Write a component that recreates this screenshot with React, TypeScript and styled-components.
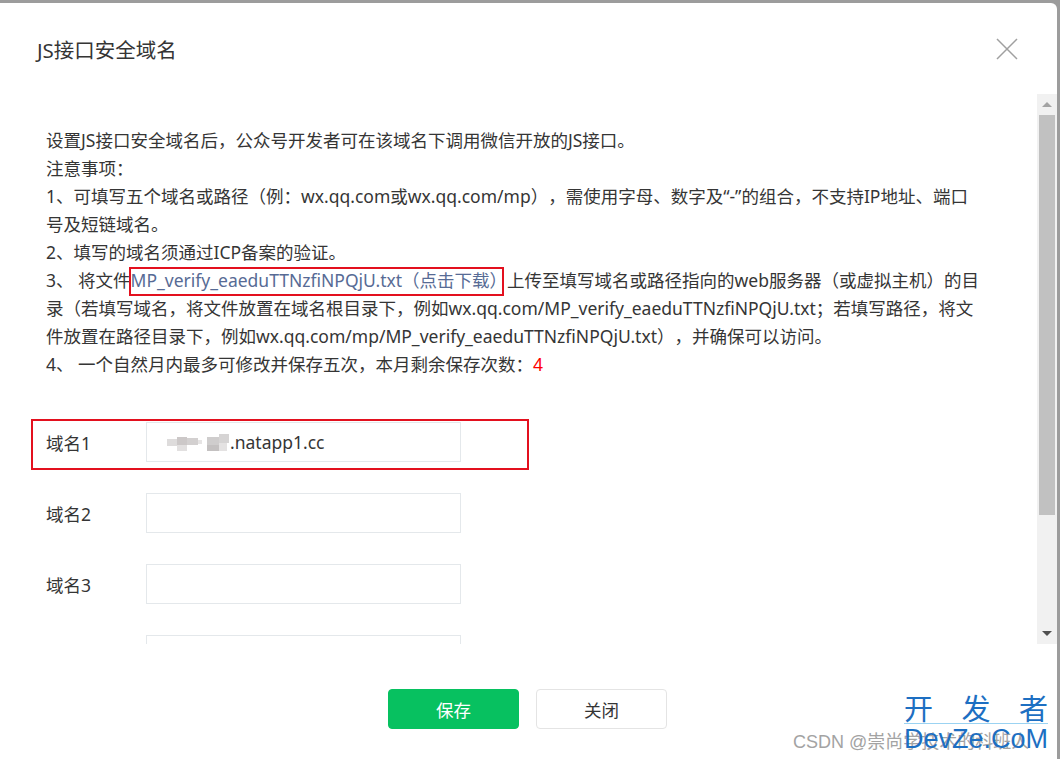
import React from 'react';
import styled, { createGlobalStyle } from 'styled-components';

const GlobalStyle = createGlobalStyle`
  html, body {
    margin: 0;
    padding: 0;
    background: #9c9c9c;
    overflow: hidden;
  }
  body {
    font-family: "Noto Sans", "Noto Sans CJK SC", sans-serif;
    text-spacing-trim: space-all;
  }
`;

const Page = styled.div`
  position: relative;
  width: 1060px;
  height: 759px;
  padding-top: 3px;
  box-sizing: border-box;
  overflow: hidden;
`;

const Dialog = styled.div`
  width: 1057px;
  height: 800px;
  background: #fff;
  border-top-right-radius: 6px;
  display: flex;
  flex-direction: column;
`;

const Header = styled.div`
  flex: none;
  height: 91px;
  display: flex;
  align-items: center;
  justify-content: space-between;
  padding: 0 39px 0 37px;
`;

const Title = styled.h3`
  margin: 0;
  font-size: 20.5px;
  font-weight: normal;
  color: #353535;
`;

const CloseIcon = styled.svg`
  width: 22px;
  height: 22px;
  color: #a0a0a0;
`;

const Body = styled.div`
  flex: none;
  height: 550px;
  display: flex;
`;

const Content = styled.div`
  flex: 1;
  overflow: hidden;
  padding: 32px 0 0 46px;
`;

const Notice = styled.div`
  width: 960px;
  font-size: 17.5px;
  line-height: 28px;
  color: #353535;
`;

const Para = styled.p`
  margin: 0;
`;

const Link = styled.span`
  position: relative;
  color: #576b95;

  &::after {
    content: '';
    position: absolute;
    left: -2px;
    right: 3px;
    top: -1px;
    bottom: -4px;
    border: 2px solid #e3101e;
  }
`;

const Count = styled.span`
  color: #f00;
`;

const Form = styled.div`
  margin-top: 44px;
  display: flex;
  flex-direction: column;
  gap: 31px;
`;

const Row = styled.div<{ $marked?: boolean }>`
  position: relative;
  display: flex;
  align-items: center;
  height: 40px;

  ${({ $marked }) =>
    $marked &&
    `
    &::after {
      content: '';
      position: absolute;
      left: -15px;
      top: -3px;
      width: 498px;
      height: 51px;
      box-sizing: border-box;
      border: 2px solid #e3101e;
    }
  `}
`;

const Label = styled.label`
  width: 100px;
  font-size: 17.5px;
  color: #353535;
`;

const Field = styled.div`
  width: 315px;
  height: 40px;
  box-sizing: border-box;
  border: 1px solid #e4e8eb;
  display: flex;
  align-items: center;
  padding-left: 20px;
  font-size: 17.5px;
  color: #353535;
`;

const Mosaic = styled.svg`
  width: 63px;
  height: 18px;
  flex: none;
`;

const Scrollbar = styled.div`
  flex: none;
  width: 20px;
  background: #f1f1f1;
  display: flex;
  flex-direction: column;
`;

const ScrollArrow = styled.div<{ $down?: boolean }>`
  flex: none;
  height: 21px;
  display: flex;
  align-items: center;
  justify-content: center;

  &::before {
    content: '';
    border-left: 5px solid transparent;
    border-right: 5px solid transparent;
    ${({ $down }) =>
      $down ? 'border-top: 5px solid #505050;' : 'border-bottom: 5px solid #a3a3a3;'}
  }
`;

const ScrollTrack = styled.div`
  flex: 1;
  padding: 0 2px;
`;

const Thumb = styled.div`
  height: 400px;
  background: #c1c1c1;
`;

const Footer = styled.div`
  flex: none;
  display: flex;
  justify-content: center;
  gap: 17px;
  padding-top: 45px;
  padding-right: 2px;
`;

const Button = styled.button<{ $primary?: boolean }>`
  width: 131px;
  height: 40px;
  border-radius: 4px;
  font-family: inherit;
  font-size: 17.5px;
  cursor: pointer;
  border: 1px solid ${({ $primary }) => ($primary ? '#07c160' : '#e4e4e4')};
  background: ${({ $primary }) => ($primary ? '#07c160' : '#fff')};
  color: ${({ $primary }) => ($primary ? '#fff' : '#353535')};
`;

const Watermark = styled.div`
  position: absolute;
  right: 0;
  bottom: 0;
  width: 270px;
  height: 70px;
  pointer-events: none;
`;

const Brand = styled.div`
  position: absolute;
  left: 114px;
  top: 2px;
  width: 144px;
  display: flex;
  justify-content: space-between;
  font-family: "Noto Sans CJK SC", sans-serif;
  font-size: 29px;
  line-height: 32px;
  color: #1d6fc2;
  border-bottom: 1px solid #9bd3f2;
`;

const BrandSub = styled.div`
  position: absolute;
  left: 114px;
  top: 35px;
  white-space: nowrap;
  font-family: "Liberation Sans", sans-serif;
  font-size: 27px;
  line-height: 30px;
  color: #1d6fc2;
`;

const Credit = styled.div`
  position: absolute;
  left: 3px;
  top: 42px;
  font-family: "Liberation Sans", "Noto Sans CJK SC", sans-serif;
  font-size: 18px;
  line-height: 22px;
  color: #a3a3a3;
  white-space: nowrap;
`;

const blocks: [number, number, number, number, string][] = [
  [0, 6, 10, 7, '#dedcdc'],
  [10, 4, 10, 8, '#ccc8c8'],
  [10, 12, 10, 6, '#e2e0e0'],
  [20, 5, 11, 7, '#d3d0d0'],
  [31, 7, 4, 4, '#e6e4e4'],
  [40, 4, 12, 8, '#cfcdcd'],
  [40, 12, 12, 6, '#c4c1c1'],
  [52, 1, 10, 9, '#d6d4d4'],
  [52, 10, 8, 8, '#e4e2e2'],
];

const domains = ['域名1', '域名2', '域名3', '域名4'];

export default function App() {
  return (
    <Page>
      <GlobalStyle />
      <Dialog>
        <Header>
          <Title>JS接口安全域名</Title>
          <CloseIcon viewBox="0 0 22 22">
            <path d="M1 1L21 21M21 1L1 21" stroke="currentColor" strokeWidth="1.5" fill="none" />
          </CloseIcon>
        </Header>
        <Body>
          <Content>
            <Notice>
              <Para>设置JS接口安全域名后，公众号开发者可在该域名下调用微信开放的JS接口。</Para>
              <Para>注意事项：</Para>
              <Para>
                1、可填写五个域名或路径（例：wx.qq.com或wx.qq.com/mp），需使用字母、数字及“-”的组合，不支持IP地址、端口
                <br />
                号及短链域名。
              </Para>
              <Para>2、填写的域名须通过ICP备案的验证。</Para>
              <Para>
                3、 将文件<Link>MP_verify_eaeduTTNzfiNPQjU.txt（点击下载）</Link>上传至填写域名或路径指向的web服务器（或虚拟主机）的目
                <br />
                录（若填写域名，将文件放置在域名根目录下，例如wx.qq.com/MP_verify_eaeduTTNzfiNPQjU.txt；若填写路径，将文
                <br />
                件放置在路径目录下，例如wx.qq.com/mp/MP_verify_eaeduTTNzfiNPQjU.txt），并确保可以访问。
              </Para>
              <Para>
                4、 一个自然月内最多可修改并保存五次，本月剩余保存次数：<Count>4</Count>
              </Para>
            </Notice>
            <Form>
              {domains.map((name, i) => (
                <Row key={name} $marked={i === 0}>
                  <Label>{name}</Label>
                  <Field>
                    {i === 0 && (
                      <>
                        <Mosaic viewBox="0 0 63 18">
                          {blocks.map(([x, y, w, h, c], k) => (
                            <rect key={k} x={x} y={y} width={w} height={h} fill={c} />
                          ))}
                        </Mosaic>
                        .natapp1.cc
                      </>
                    )}
                  </Field>
                </Row>
              ))}
            </Form>
          </Content>
          <Scrollbar>
            <ScrollArrow />
            <ScrollTrack>
              <Thumb />
            </ScrollTrack>
            <ScrollArrow $down />
          </Scrollbar>
        </Body>
        <Footer>
          <Button $primary>保存</Button>
          <Button>关闭</Button>
        </Footer>
      </Dialog>
      <Watermark>
        <Credit>CSDN @崇尚学技术的科班人</Credit>
        <Brand>
          <span>开</span>
          <span>发</span>
          <span>者</span>
        </Brand>
        <BrandSub>DevZe.CoM</BrandSub>
      </Watermark>
    </Page>
  );
}
